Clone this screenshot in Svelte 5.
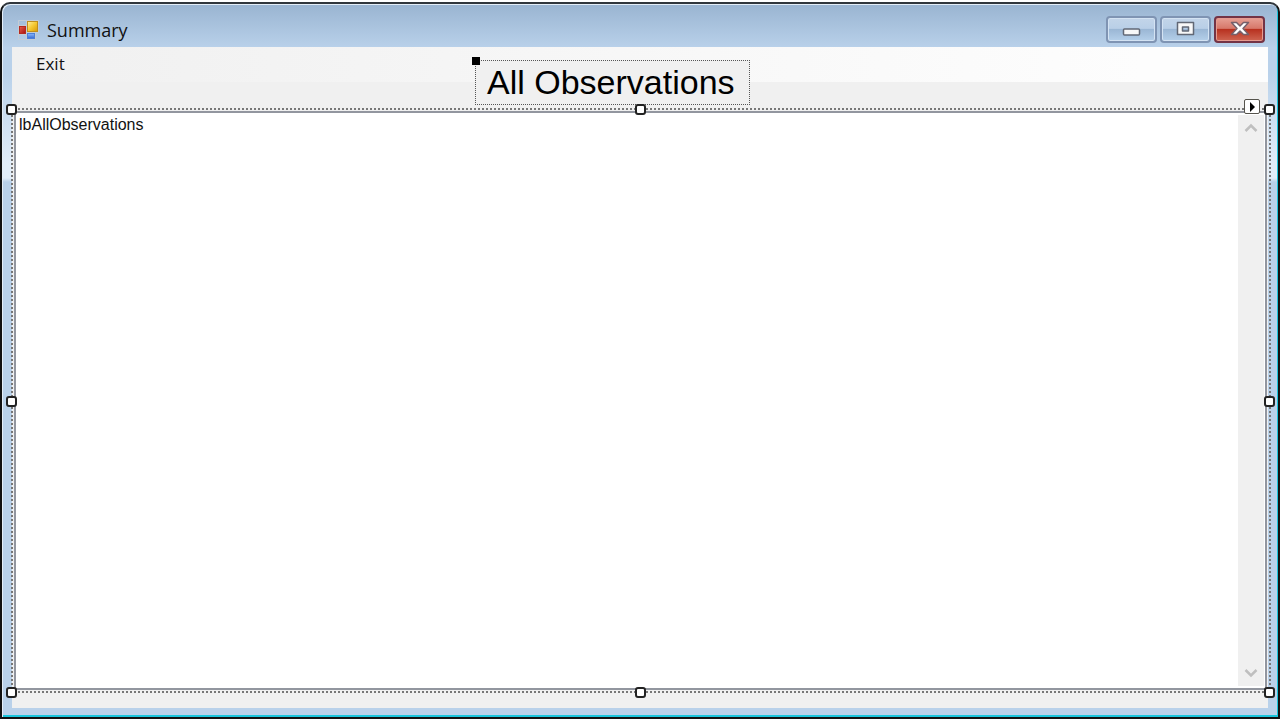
<script>
  const handles = ['nw', 'n', 'ne', 'w', 'e', 'sw', 's', 'se'];
  const items = ['lbAllObservations'];
</script>

<main class="window">
  <header class="titlebar">
    <svg class="app-icon" width="22" height="20" viewBox="0 0 22 20" aria-hidden="true">
      <defs>
        <linearGradient id="gold" x1="0" y1="0" x2="1" y2="1">
          <stop offset="0" stop-color="#fff0a0" />
          <stop offset="0.5" stop-color="#f5c832" />
          <stop offset="1" stop-color="#d99a08" />
        </linearGradient>
        <linearGradient id="red" x1="0" y1="0" x2="1" y2="1">
          <stop offset="0" stop-color="#e8604c" />
          <stop offset="1" stop-color="#a80f0c" />
        </linearGradient>
        <linearGradient id="blue" x1="0" y1="0" x2="0" y2="1">
          <stop offset="0" stop-color="#8cb8fa" />
          <stop offset="1" stop-color="#3569d4" />
        </linearGradient>
      </defs>
      <path d="M.5 .5h20v12h-3v7H.5zM8.500 .5v19M.5 5.500h8M.5 14.500h8M8.500 12.500h9" fill="none" stroke="#c3ccd6" />
      <rect x="1.500" y="6.500" width="6" height="7" fill="url(#red)" stroke="#b52a20" />
      <rect x="9.500" y="1.500" width="10" height="10" fill="url(#gold)" stroke="#c08e1c" />
      <rect x="9.500" y="13.500" width="7" height="5" fill="url(#blue)" stroke="#4d80d8" />
    </svg>
    <h1>Summary</h1>
    <div class="controls">
      <button class="control" aria-label="Minimize">
        <svg width="20" height="16" viewBox="0 0 20 16"><rect x="1.500" y="8" width="16" height="6" rx="1" fill="#f8f8f8" stroke="#626875" stroke-width="1.500" /></svg>
      </button>
      <button class="control" aria-label="Maximize">
        <svg width="20" height="16" viewBox="0 0 20 16"><path d="M1.500 1.500h16v12h-16zM6.500 6v4h6V6z" fill="#f8f8f8" fill-rule="evenodd" stroke="#626875" stroke-width="1.500" stroke-linejoin="round" /></svg>
      </button>
      <button class="control close" aria-label="Close">
        <svg width="20" height="16" viewBox="0 0 20 16"><path d="M1.500 1.500h5L10 5l3.500-3.500h5L13 7.500l5.500 6h-5L10 10l-3.500 3.500h-5L7 7.500z" fill="#fff" stroke="#76606a" stroke-width="1.500" stroke-linejoin="round" /></svg>
      </button>
    </div>
  </header>

  <div class="client">
    <div class="top">
      <nav class="menu"><button>Exit</button></nav>
      <div class="label">
        <span class="anchor"></span>
        <h2>All Observations</h2>
      </div>
    </div>

    <section class="selected" aria-label="Observations list">
      <div class="list">
        <ul>
          {#each items as item}<li>{item}</li>{/each}
        </ul>
        <div class="scroll">
          <button aria-label="Scroll up">
            <svg width="14" height="10" viewBox="0 0 14 10"><path d="M1.500 8 7 2.500 12.500 8" fill="none" stroke="#bfbfbf" stroke-width="2.500" /></svg>
          </button>
          <button aria-label="Scroll down">
            <svg width="14" height="10" viewBox="0 0 14 10"><path d="M1.500 2 7 7.500 12.500 2" fill="none" stroke="#bfbfbf" stroke-width="2.500" /></svg>
          </button>
        </div>
      </div>
      <div class="outline"></div>
      <button class="tag" aria-label="List tasks">
        <svg width="8" height="10" viewBox="0 0 8 10"><path d="M2 0v10l5-5z" fill="#000" /></svg>
      </button>
      {#each handles as handle}<span class="handle {handle}"></span>{/each}
    </section>
  </div>
</main>

<style>
  :global(body) {
    margin: 0;
    background: linear-gradient(#fff 16px, #000 48px);
  }

  * {
    box-sizing: border-box;
  }

  button {
    padding: 0;
    border: 0;
    background: none;
    color: inherit;
    font: inherit;
  }

  svg {
    display: block;
  }

  .window {
    display: flex;
    flex-direction: column;
    height: calc(100vh - 3px);
    margin-top: 2px;
    padding: 0 10px 9px;
    border: 2px solid #111;
    border-top-color: #30363c;
    border-radius: 10px 10px 0 0;
    background: linear-gradient(#99b4d1, #b9d1ea 44px, #b9d1ea 70px, #e1edf9 160px, #e1edf9 174px, #b9d1ea 178px);
    box-shadow: inset 1px 1px #e4eef8, inset -1px -2px #18c5dc;
    color: #111;
    font-family: "Open Sans", "Noto Sans", sans-serif;
  }

  .titlebar {
    display: flex;
    flex: none;
    align-items: center;
    height: 43px;
    padding: 8px 3px 0 6px;
  }

  h1 {
    flex: 1;
    margin: 0 0 0 7px;
    font-size: 18px;
    font-weight: 400;
    line-height: 24px;
  }

  .controls {
    display: flex;
    gap: 3px;
    padding-bottom: 1px;
  }

  .control {
    display: grid;
    place-items: center;
    width: 51px;
    height: 27px;
    border: 2px solid #7f94b3;
    border-radius: 4px;
    background: linear-gradient(#c3d5e9, #b9cfe7 45%, #9bb7d5 50%, #b5d0ea);
    box-shadow: inset 0 0 0 1px #d4e3f3;
  }

  .close {
    border-color: #733345;
    background: linear-gradient(#e6a095, #d7786a 45%, #b83220 50%, #cf6652);
    box-shadow: inset 0 0 0 1px #e69b90;
  }

  .client {
    display: flex;
    flex: 1;
    flex-direction: column;
    min-height: 0;
    padding-bottom: 16px;
    background: #f0f0f0;
  }

  .top {
    position: relative;
    height: 62px;
  }

  .menu {
    height: 35px;
    padding: 5px 24px;
    background: linear-gradient(90deg, #f0f0f0, #fdfdfd 90%);
    font-size: 17px;
    line-height: 24px;
  }

  .menu button {
    display: block;
  }

  /* The label floats over the menu strip on the form's design surface. */
  .label {
    position: absolute;
    top: 13px;
    left: calc(50% - 165px);
    padding: 0 14px 0 11px;
    border: 1px dotted #555;
    background: #f0f0f0;
  }

  h2 {
    margin: 0;
    color: #000;
    font: 400 34px/43px "Liberation Sans", Arial, sans-serif;
    white-space: nowrap;
  }

  .anchor {
    position: absolute;
    top: -4px;
    left: -4px;
    width: 8px;
    height: 8px;
    background: #000;
  }

  .selected {
    position: relative;
    display: flex;
    flex: 1;
    min-height: 0;
    padding: 2px 1px 2px 2px;
  }

  .list {
    display: flex;
    flex: 1;
    border: 2px solid #92969f;
    background: #fff;
  }

  ul {
    flex: 1;
    margin: 0;
    padding: 0 3px;
    list-style: none;
  }

  li {
    font: 16px/24px "Liberation Sans", Arial, sans-serif;
  }

  .scroll {
    display: flex;
    flex-direction: column;
    justify-content: space-between;
    width: 26px;
    margin: 2px 1px 2px 0;
    padding: 8px 6px;
    background: #f0f0f0;
  }

  .outline {
    position: absolute;
    inset: -1px -3px -1px -1px;
    border: 2px dotted #777;
    pointer-events: none;
  }

  .handle {
    position: absolute;
    width: 11px;
    height: 11px;
    border: 2px solid #222;
    border-radius: 3px;
    background: #fff;
  }

  .nw, .w, .sw { left: -6px; }
  .ne, .e, .se { right: -7px; }
  .n, .s { left: calc(50% - 5px); }
  .nw, .n, .ne { top: -5px; }
  .w, .e { top: calc(50% - 5px); }
  .sw, .s, .se { bottom: -6px; }

  .tag {
    position: absolute;
    top: -10px;
    right: 8px;
    display: grid;
    place-items: center;
    width: 16px;
    height: 15px;
    border: 1px solid #55534c;
    border-radius: 2px;
    background: #fff;
  }
</style>
